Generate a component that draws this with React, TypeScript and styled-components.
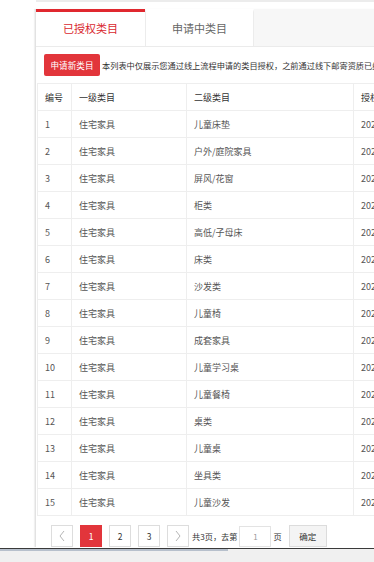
import React from 'react';
import styled, { createGlobalStyle } from 'styled-components';

const GlobalStyle = createGlobalStyle`
  html, body {
    margin: 0;
    padding: 0;
    background: #fff;
    overflow: hidden;
    font-family: "Noto Sans CJK SC", "Noto Sans", sans-serif;
  }
`;

const rows = [
  '儿童床垫',
  '户外/庭院家具',
  '屏风/花窗',
  '柜类',
  '高低/子母床',
  '床类',
  '沙发类',
  '儿童椅',
  '成套家具',
  '儿童学习桌',
  '儿童餐椅',
  '桌类',
  '儿童桌',
  '坐具类',
  '儿童沙发',
];

function Chevron({ dir }: { dir: 'left' | 'right' }) {
  return (
    <svg width="8" height="12" viewBox="0 0 8 12">
      <path
        d={dir === 'left' ? 'M6 1 L2 6 L6 11' : 'M2 1 L6 6 L2 11'}
        fill="none"
        stroke="#b5b5b5"
        strokeWidth="1"
      />
    </svg>
  );
}

function App() {
  return (
    <>
      <GlobalStyle />
      <Page>
        <TopStrip />
        <Panel>
          <TabBar>
            <Tab active>已授权类目</Tab>
            <Tab>申请中类目</Tab>
          </TabBar>
          <Content>
            <Toolbar>
              <ApplyButton type="button">申请新类目</ApplyButton>
              <Notice>
                本列表中仅展示您通过线上流程申请的类目授权，之前通过线下邮寄资质已经授权的类目不在此展示
              </Notice>
            </Toolbar>
            <Table>
              <colgroup>
                <col style={{ width: 34 }} />
                <col style={{ width: 115 }} />
                <col style={{ width: 167 }} />
                <col style={{ width: 150 }} />
              </colgroup>
              <thead>
                <tr>
                  <Th>编号</Th>
                  <Th>一级类目</Th>
                  <Th>二级类目</Th>
                  <Th>授权时间</Th>
                </tr>
              </thead>
              <tbody>
                {rows.map((name, index) => (
                  <tr key={index}>
                    <Td>{index + 1}</Td>
                    <Td>住宅家具</Td>
                    <Td>{name}</Td>
                    <Td>2021-03-18 10:26:35</Td>
                  </tr>
                ))}
              </tbody>
            </Table>
            <Pager>
              <PageButtons>
                <PageButton disabled>
                  <Chevron dir="left" />
                </PageButton>
                <PageButton current>1</PageButton>
                <PageButton>2</PageButton>
                <PageButton>3</PageButton>
                <PageButton>
                  <Chevron dir="right" />
                </PageButton>
              </PageButtons>
              <PagerText>共3页，去第</PagerText>
              <PageInput defaultValue="1" />
              <PagerText>页</PagerText>
              <ConfirmButton type="button">确定</ConfirmButton>
            </Pager>
          </Content>
        </Panel>
      </Page>
      <BottomBar>
        <ScrollThumb />
      </BottomBar>
    </>
  );
}

export default App;

const Page = styled.div`
  padding-left: 35px;
  width: 560px;
`;

const TopStrip = styled.div`
  height: 2px;
  margin-left: 1px;
  background: #ececec;
  margin-bottom: 7px;
`;

const Panel = styled.div`
  border-left: 1px solid #e2e2e2;
  box-shadow: -1px 0 1px #f0f0f0;
`;

const TabBar = styled.div`
  display: flex;
  height: 37px;
  background: #f7f7f7;
  border-bottom: 1px solid #ebebeb;
`;

const Tab = styled.div<{ active?: boolean }>`
  box-sizing: border-box;
  width: 109px;
  height: 37px;
  display: flex;
  align-items: center;
  justify-content: center;
  background: #fff;
  font-size: 11px;
  color: ${(p) => (p.active ? '#d9282f' : '#666')};
  border-top: 3px solid ${(p) => (p.active ? '#e0282f' : '#fff')};
  border-left: ${(p) => (p.active ? 'none' : '1px solid #ececec')};
  border-right: ${(p) => (p.active ? 'none' : '1px solid #ececec')};
  padding-bottom: 2px;
`;

const Content = styled.div`
  padding-top: 7px;
`;

const Toolbar = styled.div`
  display: flex;
  align-items: center;
  padding-left: 8px;
  margin-bottom: 7px;
`;

const ApplyButton = styled.button`
  flex: none;
  width: 56px;
  height: 22px;
  padding: 0;
  border: none;
  border-radius: 2px;
  background: #e2353b;
  color: #fff;
  font-family: inherit;
  font-size: 8.6px;
  margin-right: 2px;
`;

const Notice = styled.span`
  white-space: nowrap;
  font-size: 8.2px;
  color: #333;
`;

const Table = styled.table`
  table-layout: fixed;
  width: 466px;
  margin-left: 1px;
  border-collapse: collapse;
  border-top: 1px solid #eeeeee;
`;

const Th = styled.th`
  height: 26px;
  padding: 0 0 0 7px;
  text-align: left;
  font-weight: normal;
  font-size: 9px;
  color: #333;
  border: 1px solid #eeeeee;
  border-top: none;
  white-space: nowrap;
  overflow: hidden;
`;

const Td = styled.td`
  height: 26px;
  padding: 0 0 0 7px;
  font-size: 9px;
  color: #555;
  border: 1px solid #eeeeee;
  white-space: nowrap;
  overflow: hidden;
`;

const Pager = styled.div`
  display: flex;
  align-items: center;
  padding: 9px 0 0 15px;
`;

const PageButtons = styled.div`
  display: flex;
  gap: 7px;
  margin-right: 3px;
`;

const PageButton = styled.button<{ current?: boolean }>`
  box-sizing: border-box;
  width: 22px;
  height: 22px;
  padding: 0;
  display: flex;
  align-items: center;
  justify-content: center;
  border: 1px solid ${(p) => (p.current ? '#e2353b' : '#dddddd')};
  background: ${(p) => (p.current ? '#e2353b' : '#fff')};
  color: ${(p) => (p.current ? '#fff' : '#333')};
  font-family: inherit;
  font-size: 8.5px;
`;

const PagerText = styled.span`
  font-size: 8.2px;
  color: #333;
  white-space: nowrap;
`;

const PageInput = styled.input`
  box-sizing: border-box;
  width: 32px;
  height: 21px;
  margin: 0 2px 0 2px;
  padding: 0;
  border: 1px solid #e3e3e3;
  text-align: center;
  font-family: inherit;
  font-size: 8px;
  color: #999;
`;

const ConfirmButton = styled.button`
  box-sizing: border-box;
  width: 38px;
  height: 22px;
  margin-left: 7px;
  padding: 0;
  border: 1px solid #dcdcdc;
  background: #f4f4f4;
  color: #333;
  font-family: inherit;
  font-size: 8.5px;
`;

const BottomBar = styled.div`
  position: fixed;
  left: 0;
  right: 0;
  bottom: 0;
  height: 13px;
  background: #f0f0f0;
  border-top: 1px solid #3a3a3a;
`;

const ScrollThumb = styled.div`
  width: 228px;
  height: 2px;
  background: #b7c0cc;
`;
